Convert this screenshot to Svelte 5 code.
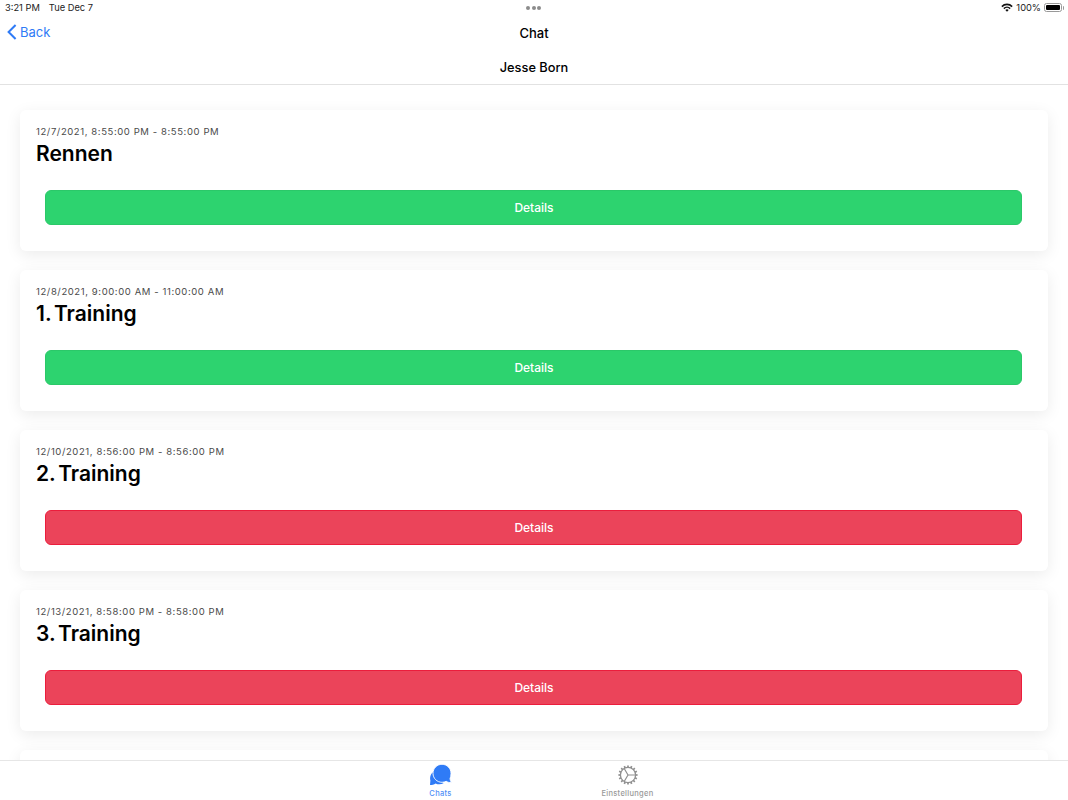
<script>
  const events = [
    { date: '12/7/2021, 8:55:00 PM - 8:55:00 PM', title: 'Rennen', tone: 'green' },
    { date: '12/8/2021, 9:00:00 AM - 11:00:00 AM', title: '1. Training', tone: 'green' },
    { date: '12/10/2021, 8:56:00 PM - 8:56:00 PM', title: '2. Training', tone: 'red' },
    { date: '12/13/2021, 8:58:00 PM - 8:58:00 PM', title: '3. Training', tone: 'red' }
  ];
  const teeth = Array.from({ length: 16 }, (_, i) => i * 22.5);
</script>

<div class="page">
  <header class="header">
    <div class="status">
      <div class="status-left"><span>3:21 PM</span><span>Tue Dec 7</span></div>
      <div class="dots"><i></i><i></i><i></i></div>
      <div class="status-right">
        <svg class="wifi" width="12" height="9" viewBox="0 0 12 9">
          <path d="M0.3 3 A8 8 0 0 1 11.7 3 L10.6 4.2 A6.4 6.4 0 0 0 1.4 4.2 Z" fill="#111" />
          <path d="M2.3 5 A5.2 5.2 0 0 1 9.7 5 L8.6 6.2 A3.6 3.6 0 0 0 3.4 6.2 Z" fill="#111" />
          <path d="M4.3 7 A2.4 2.4 0 0 1 7.7 7 L6 8.8 Z" fill="#111" />
        </svg>
        <span>100%</span>
        <span class="battery"><b></b></span>
      </div>
    </div>
    <div class="toolbar">
      <div class="back">
        <svg width="11" height="16" viewBox="0 0 11 16"><path d="M9.6 1 L2.6 8 L9.6 15" fill="none" stroke="#2f7bf6" stroke-width="2" /></svg>
        <span>Back</span>
      </div>
      <div class="title">Chat</div>
    </div>
    <div class="subtitle">Jesse Born</div>
  </header>

  <main class="list">
    {#each events as e}
      <section class="card">
        <div class="date">{e.date}</div>
        <h2>{e.title}</h2>
        <div class="btn {e.tone}">Details</div>
      </section>
    {/each}
    <section class="card"></section>
  </main>

  <nav class="tabs">
    <div class="tab active">
      <svg width="24" height="22" viewBox="1 0 24 22">
        <path d="M6 7.5 C2.6 9.5 1.6 13 2.4 16.6 L2 21 C4 21 6 20.4 7.6 19.4 C10 20.6 13 20.6 15.5 19.2 Z" fill="#2f7bf6" />
        <path d="M14 0.3 C9 0.3 5 4.3 5 9.3 C5 14.3 9 18.3 14 18.3 C15.5 18.3 17 17.9 18.2 17.3 C19.6 18.2 21.4 18.7 23.4 18.5 C22.6 17.4 22.3 16.2 22 14.8 C22.7 13.4 23 11.4 23 9.3 C23 4.3 19 0.3 14 0.3 Z" fill="#2f7bf6" stroke="#fff" stroke-width="0.9" />
      </svg>
      <span>Chats</span>
    </div>
    <div class="tab">
      <svg width="22" height="22" viewBox="0 0 22 22" fill="none" stroke="#8f8f8f">
        {#each teeth as a}
          <line x1="11" y1="1.4" x2="11" y2="3.6" stroke-width="1.7" transform="rotate({a} 11 11)" />
        {/each}
        <circle cx="11" cy="11" r="7.6" stroke-width="1.3" />
        <path d="M11 11 L18.5 11 M11 11 L7.2 4.5 M11 11 L7.2 17.5" stroke-width="1.2" />
      </svg>
      <span>Einstellungen</span>
    </div>
  </nav>
</div>

<style>
  :global(body) {
    margin: 0;
    background: #fff;
  }
  .page {
    height: 800px;
    display: flex;
    flex-direction: column;
    overflow: hidden;
    font-family: Inter, "Liberation Sans", sans-serif;
    color: #000;
  }
  .header {
    flex: none;
    height: 84px;
    border-bottom: 1px solid #e2e2e2;
    display: flex;
    flex-direction: column;
  }
  .status {
    height: 15px;
    display: grid;
    grid-template-columns: 1fr auto 1fr;
    align-items: center;
    padding: 0 6px 0 5px;
    font-size: 9.3px;
    color: #222;
  }
  .status-left {
    display: flex;
    gap: 9px;
  }
  .dots {
    display: flex;
    gap: 1.5px;
  }
  .dots i {
    width: 4px;
    height: 4px;
    border-radius: 50%;
    background: #8c8c8c;
  }
  .status-right {
    display: flex;
    justify-content: flex-end;
    align-items: center;
    gap: 3px;
  }
  .battery {
    width: 18px;
    height: 9px;
    box-sizing: border-box;
    border: 1px solid #999;
    border-radius: 2.5px;
    padding: 1px;
    display: flex;
    position: relative;
  }
  .battery::after {
    content: "";
    position: absolute;
    right: -3px;
    top: 1.5px;
    width: 1.5px;
    height: 4px;
    background: #999;
    border-radius: 0 1px 1px 0;
  }
  .battery b {
    flex: 1;
    background: #000;
    border-radius: 1px;
  }
  .toolbar {
    height: 35px;
    position: relative;
    display: flex;
    align-items: center;
    justify-content: center;
  }
  .back {
    position: absolute;
    left: 6px;
    top: 9px;
    display: flex;
    align-items: center;
    gap: 3px;
    font-size: 13px;
    color: #2f7bf6;
  }
  .title {
    font-size: 13px;
    font-weight: 500;
  }
  .subtitle {
    height: 33px;
    padding-top: 1px;
    box-sizing: border-box;
    display: flex;
    align-items: center;
    justify-content: center;
    font-size: 12.8px;
    font-weight: 500;
  }
  .list {
    flex: 1;
    min-height: 0;
    overflow: hidden;
    padding: 25px 20px 0;
    display: flex;
    flex-direction: column;
    gap: 19px;
    background: #fff;
  }
  .card {
    flex: none;
    height: 141px;
    box-sizing: border-box;
    background: #fff;
    border-radius: 6px;
    padding: 16px 16px 0;
    box-shadow: 0 4px 16px rgba(0, 0, 0, 0.08);
  }
  .date {
    font-size: 9.5px;
    line-height: 12px;
    letter-spacing: 0.6px;
    color: #4a4a4a;
  }
  h2 {
    margin: 3px 0 0;
    font-size: 21px;
    line-height: 25px;
    font-weight: 600;
    word-spacing: -2.5px;
  }
  .btn {
    margin: 24px 10px 0 9px;
    padding-left: 1px;
    height: 35px;
    box-sizing: border-box;
    border-radius: 6px;
    display: flex;
    align-items: center;
    justify-content: center;
    color: #fff;
    font-size: 12px;
    font-weight: 500;
  }
  .green {
    background: #2dd36f;
    border: 1px solid #2bc869;
  }
  .red {
    background: #eb445a;
    border: 1px solid #eb1d3c;
  }
  .tabs {
    flex: none;
    height: 39px;
    border-top: 1px solid #e6e6e6;
    background: #fff;
    display: flex;
    justify-content: center;
    position: relative;
  }
  .tab {
    width: 187px;
    display: flex;
    flex-direction: column;
    align-items: center;
    padding-top: 3px;
    color: #999;
    font-size: 7.5px;
    font-weight: 500;
    letter-spacing: 0.3px;
    gap: 3px;
  }
  .tab svg {
    flex: none;
  }
  .tab.active {
    color: #4f8ff7;
  }
</style>
